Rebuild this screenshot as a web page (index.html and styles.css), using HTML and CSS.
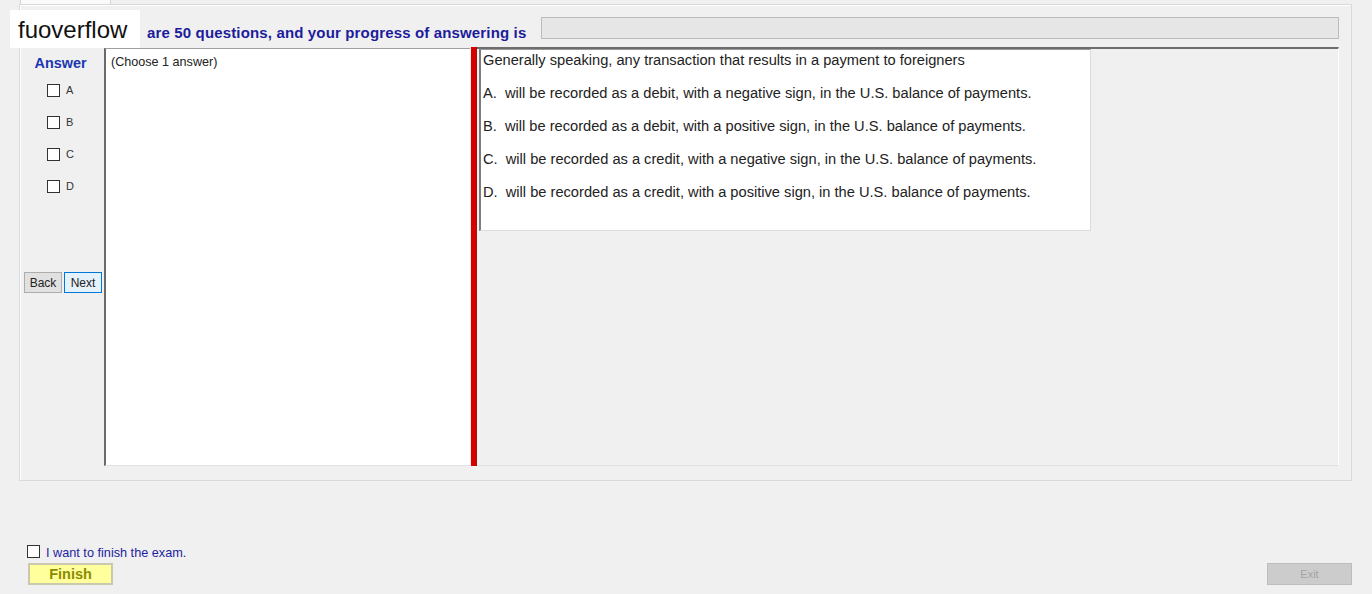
FILE: index.html
```html
<!DOCTYPE html>
<html lang="en">
<head>
  <meta charset="UTF-8">
  <title>Exam</title>
  <link rel="stylesheet" href="styles.css">
</head>
<body>

  <div class="window">
    <div class="tabstrip"><div class="tab"></div></div>

    <div class="frame">
      <div class="header">
        <span class="progress-label">are 50 questions, and your progress of answering is</span>
        <div class="progress"></div>
      </div>

      <div class="main">
        <div class="answer-col">
          <div class="answer-title">Answer</div>
          <label class="opt"><span class="box"></span>A</label>
          <label class="opt"><span class="box"></span>B</label>
          <label class="opt"><span class="box"></span>C</label>
          <label class="opt"><span class="box"></span>D</label>
          <div class="nav">
            <button class="btn">Back</button>
            <button class="btn next">Next</button>
          </div>
        </div>

        <div class="notes">(Choose 1 answer)</div>
        <div class="splitter"></div>

        <div class="question-pane">
          <div class="question">
            <p>Generally speaking, any transaction that results in a payment to foreigners</p>
            <p>A.&nbsp; will be recorded as a debit, with a negative sign, in the U.S. balance of payments.</p>
            <p>B.&nbsp; will be recorded as a debit, with a positive sign, in the U.S. balance of payments.</p>
            <p>C.&nbsp; will be recorded as a credit, with a negative sign, in the U.S. balance of payments.</p>
            <p>D.&nbsp; will be recorded as a credit, with a positive sign, in the U.S. balance of payments.</p>
          </div>
        </div>
      </div>
    </div>

    <div class="footer">
      <label class="finish-check"><span class="box"></span><span class="finish-text">I want to finish the exam.</span></label>
      <div class="footer-buttons">
        <button class="finish-btn">Finish</button>
        <button class="exit-btn">Exit</button>
      </div>
    </div>

    <div class="watermark">fuoverflow</div>
  </div>

</body>
</html>
```

FILE: styles.css
```css
* {
  box-sizing: border-box;
}

body {
  margin: 0;
  background: #f0f0f0;
  font-family: "Liberation Sans", Arial, sans-serif;
  color: #222;
}

.window {
  position: relative;
  width: 1372px;
  height: 594px;
}

.tabstrip {
  height: 4px;
}

.tab {
  margin-left: 20px;
  width: 91px;
  height: 4px;
  background: #fafafa;
  border-left: 1px solid #d4d4d4;
  border-right: 1px solid #d4d4d4;
}

.frame {
  margin-left: 19px;
  width: 1333px;
  height: 477px;
  border: 1px solid #d9d9d9;
  box-shadow: inset 1px 1px 0 #fff;
  padding: 0 12px 14px 4px;
}

.header {
  height: 42px;
  display: flex;
  align-items: flex-start;
  padding-top: 12px;
}

.progress-label {
  margin-left: 123px;
  width: 394px;
  padding-top: 7px;
  font-size: 15px;
  letter-spacing: 0.15px;
  font-weight: bold;
  color: #1c1c9c;
  white-space: nowrap;
}

.progress {
  flex: 1;
  height: 22px;
  background: #e6e6e6;
  border: 1px solid #bcbcbc;
}

.main {
  height: 419px;
  display: flex;
}

.answer-col {
  width: 80px;
  display: flex;
  flex-direction: column;
}

.answer-title {
  padding: 8px 7px 0 0;
  height: 27px;
  line-height: 16px;
  text-align: center;
  font-size: 14.4px;
  font-weight: bold;
  color: #1a36b0;
}

.opt {
  height: 32px;
  display: flex;
  align-items: center;
  gap: 6px;
  padding-left: 23px;
  font-size: 11px;
  color: #333;
}

.box {
  display: inline-block;
  width: 13px;
  height: 13px;
  background: #fff;
  border: 1px solid #333;
}

.nav {
  margin-top: 70px;
  display: flex;
  gap: 2px;
}

.btn {
  width: 38px;
  height: 21px;
  padding: 0;
  font-family: "Liberation Sans", Arial, sans-serif;
  font-size: 12px;
  color: #222;
  background: #e1e1e1;
  border: 1px solid #adadad;
}

.btn.next {
  background: #e5f1fb;
  border-color: #0078d7;
}

.notes {
  width: 366px;
  margin-top: 1px;
  background: #fff;
  border-left: 2px solid #6a6a6a;
  border-top: 1px solid #a0a0a0;
  border-bottom: 1px solid #e2e2e2;
  padding: 6px 5px;
  font-size: 12.6px;
  color: #222;
}

.splitter {
  width: 6px;
  margin-left: 1px;
  background: #d60000;
  border-right: 1px solid #a31010;
}

.question-pane {
  flex: 1;
  border-top: 2px solid #6d6d6d;
  border-right: 1px solid #fff;
  border-bottom: 1px solid #e0e0e0;
}

.question {
  margin-left: 2px;
  width: 612px;
  height: 182px;
  background: #fff;
  border-left: 2px solid #7c7c7c;
  border-top: 1px solid #999;
  border-right: 1px solid #dcdcdc;
  border-bottom: 1px solid #dcdcdc;
  padding: 2px 0 0 2px;
  font-size: 14.65px;
}

.question p {
  margin: 0 0 17px;
  line-height: 16px;
  white-space: nowrap;
}

.footer {
  padding: 63px 20px 0 27px;
}

.finish-check {
  display: flex;
  align-items: center;
  gap: 6px;
  font-size: 12.7px;
  color: #1e1ea0;
  height: 14px;
}

.finish-text {
  padding-top: 3px;
}

.footer-buttons {
  margin-top: 5px;
  display: flex;
  justify-content: space-between;
}

.finish-btn {
  margin-left: 1px;
  width: 85px;
  height: 22px;
  padding: 0;
  background: #ffff9c;
  border: 2px solid #c9c9b0;
  font-family: "Liberation Sans", Arial, sans-serif;
  font-size: 14.5px;
  font-weight: bold;
  color: #8c8c00;
}

.exit-btn {
  width: 85px;
  height: 22px;
  padding: 0;
  background: #cccccc;
  border: 1px solid #bdbdbd;
  font-family: "Liberation Sans", Arial, sans-serif;
  font-size: 11px;
  color: #a4a4a4;
}

.watermark {
  position: absolute;
  left: 10px;
  top: 10px;
  width: 130px;
  height: 38px;
  padding-left: 8px;
  background: #fff;
  font-size: 24px;
  line-height: 40px;
  color: #111;
}
```
